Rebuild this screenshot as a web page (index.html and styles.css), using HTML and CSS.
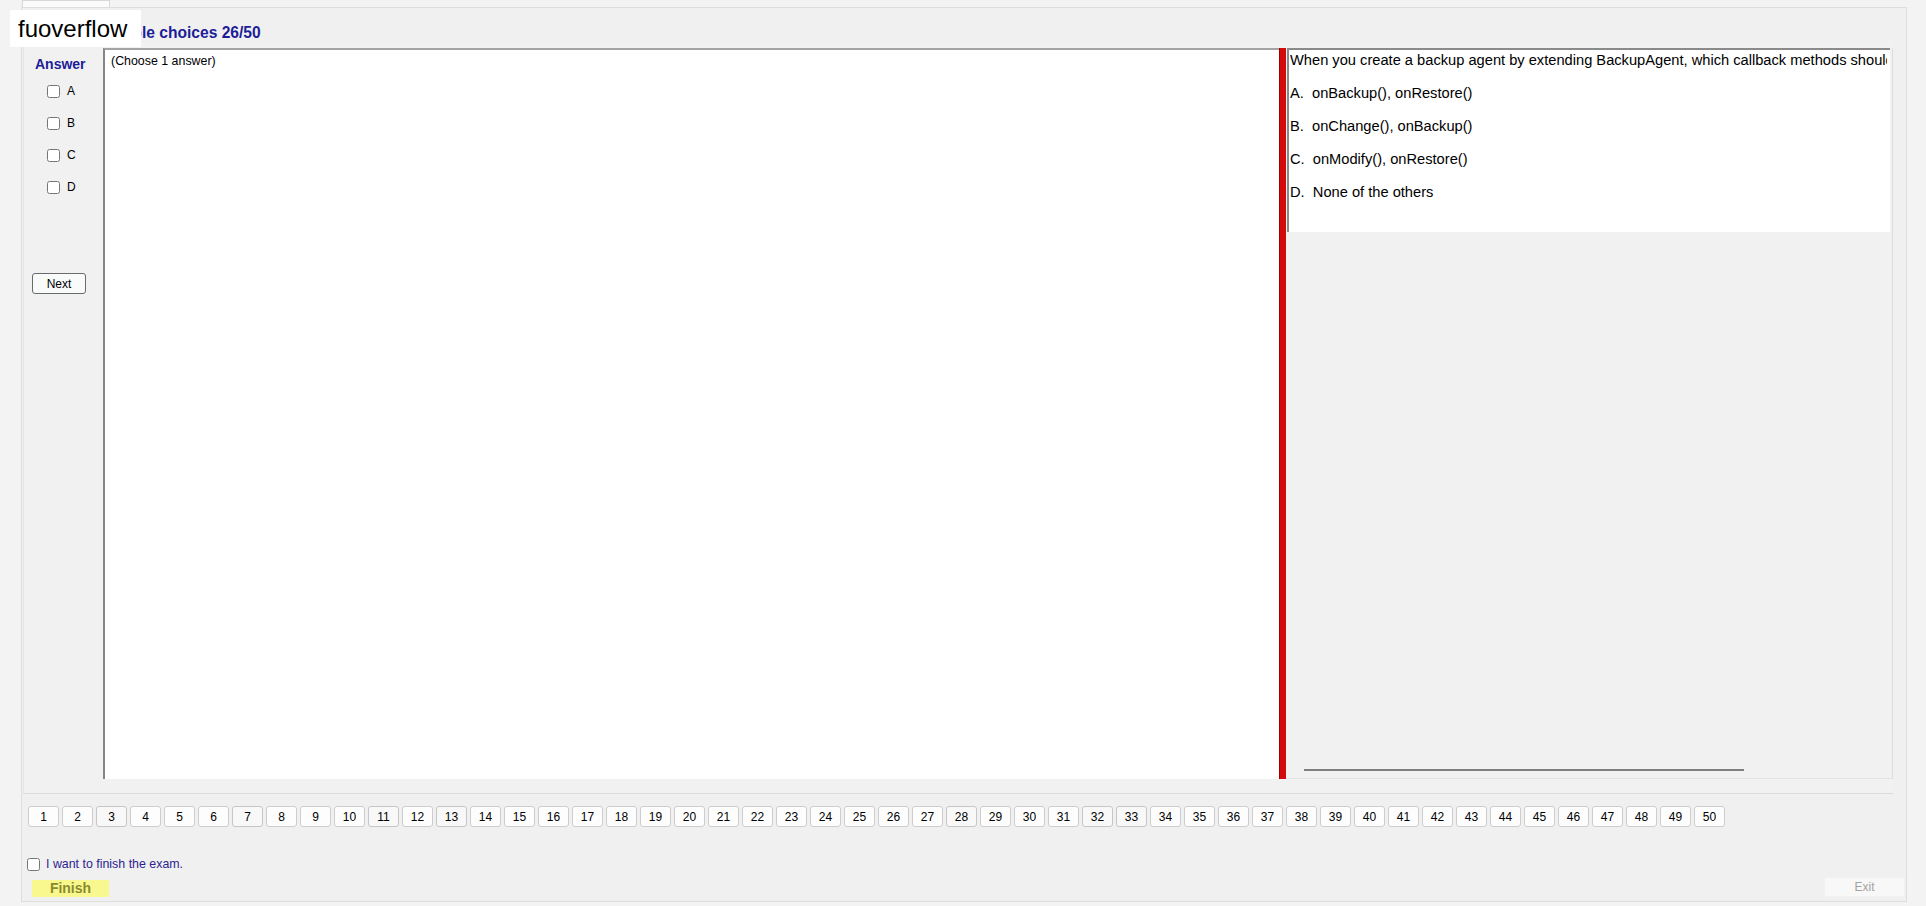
FILE: index.html
```html
<!DOCTYPE html>
<html lang="en">
<head>
<meta charset="utf-8">
<title>Exam</title>
<link rel="stylesheet" href="styles.css">
</head>
<body>
<div class="brand">fuoverflow</div>
<div class="tabstrip"><div class="tab"></div></div>
<div class="frame">
  <div class="title">Multiple choices 26/50</div>
  <div class="main">
    <div class="answer-col">
      <div class="answer-label">Answer</div>
      <label class="opt"><input type="checkbox"><span>A</span></label>
      <label class="opt"><input type="checkbox"><span>B</span></label>
      <label class="opt"><input type="checkbox"><span>C</span></label>
      <label class="opt"><input type="checkbox"><span>D</span></label>
      <button class="next">Next</button>
    </div>
    <div class="work"><div class="hint">(Choose 1 answer)</div></div>
    <div class="divider"></div>
    <div class="qpanel">
      <div class="question">
        <p class="qline qfirst">When you create a backup agent by extending BackupAgent, which callback methods should you implement?</p>
        <p class="qline opt-line">A.&nbsp; onBackup(), onRestore()</p>
        <p class="qline opt-line">B.&nbsp; onChange(), onBackup()</p>
        <p class="qline opt-line">C.&nbsp; onModify(), onRestore()</p>
        <p class="qline opt-line">D.&nbsp; None of the others</p>
      </div>
      <div class="scrollline"></div>
    </div>
  </div>
  <div class="pager">
    <button class="pg">1</button><button class="pg">2</button><button class="pg seen">3</button><button class="pg">4</button><button class="pg">5</button><button class="pg">6</button><button class="pg seen">7</button><button class="pg">8</button><button class="pg">9</button><button class="pg">10</button><button class="pg seen">11</button><button class="pg">12</button><button class="pg seen">13</button><button class="pg">14</button><button class="pg">15</button><button class="pg">16</button><button class="pg">17</button><button class="pg">18</button><button class="pg">19</button><button class="pg">20</button><button class="pg">21</button><button class="pg">22</button><button class="pg">23</button><button class="pg">24</button><button class="pg">25</button><button class="pg">26</button><button class="pg">27</button><button class="pg seen">28</button><button class="pg">29</button><button class="pg">30</button><button class="pg">31</button><button class="pg seen">32</button><button class="pg seen">33</button><button class="pg">34</button><button class="pg">35</button><button class="pg">36</button><button class="pg">37</button><button class="pg">38</button><button class="pg">39</button><button class="pg">40</button><button class="pg">41</button><button class="pg">42</button><button class="pg">43</button><button class="pg">44</button><button class="pg">45</button><button class="pg">46</button><button class="pg">47</button><button class="pg">48</button><button class="pg">49</button><button class="pg">50</button>
  </div>
  <label class="finish-check"><input type="checkbox"><span>I want to finish the exam.</span></label>
  <div class="actions">
    <div class="finish">Finish</div>
    <button class="exit" disabled>Exit</button>
  </div>
</div>
</body>
</html>
```

FILE: styles.css
```css
* { box-sizing: border-box; }
html, body { margin: 0; padding: 0; }
body {
  width: 1926px;
  height: 906px;
  overflow: hidden;
  background: #f3f3f3;
  font-family: "Liberation Sans", Arial, sans-serif;
  color: #000;
  position: relative;
}
.brand {
  position: absolute;
  left: 10px;
  top: 10px;
  width: 131px;
  height: 37px;
  background: #fff;
  font-size: 24px;
  line-height: 37px;
  padding-left: 8px;
  color: #000;
  z-index: 5;
}
.tabstrip {
  height: 7px;
  display: flex;
}
.tab {
  margin-left: 22px;
  width: 88px;
  height: 7px;
  background: #fbfbfb;
  border: 1px solid #d8d8d8;
  border-bottom: none;
}
.frame {
  margin-left: 21px;
  width: 1886px;
  height: 895px;
  border: 1px solid #dedede;
  background: #f0f0f0;
  display: flex;
  flex-direction: column;
}
.title {
  margin: 16px 0 0 74px;
  height: 18px;
  line-height: 18px;
  font-size: 15.6px;
  font-weight: bold;
  color: #1d1d98;
}
.main {
  margin-left: 1px;
  width: 1870px;
  height: 752px;
  padding-top: 6px;
  padding-bottom: 14px;
  border-bottom: 1px solid #dcdcdc;
  border-left: 1px solid #e6e6e6;
  display: flex;
  background: #f1f1f1;
}
.answer-col {
  width: 79px;
  display: flex;
  flex-direction: column;
}
.answer-label {
  margin-top: 8px;
  padding-left: 11px;
  height: 16px;
  line-height: 16px;
  font-size: 14px;
  font-weight: bold;
  color: #1d1d98;
}
.opt {
  height: 32px;
  display: flex;
  align-items: center;
  padding-left: 23px;
  font-size: 12px;
}
.opt:first-of-type { margin-top: 3px; }
.opt input {
  margin: 0 7px 0 0;
  width: 13px;
  height: 13px;
}
.next {
  margin: 70px 0 0 8px;
  width: 54px;
  height: 21px;
  padding: 0;
  border: 1px solid #6a6a6a;
  border-radius: 3px;
  background: #f9fbfa;
  font-family: "Liberation Sans", Arial, sans-serif;
  font-size: 12px;
  color: #000;
}
.work {
  width: 1176px;
  height: 731px;
  background: #fff;
  border-left: 2px solid #858585;
  border-top: 2px solid #a3a3a3;
  padding: 3px 6px;
}
.hint {
  font-size: 12.4px;
  line-height: 16px;
}
.divider {
  width: 7px;
  height: 731px;
  background: #d40a0a;
  border-left: 1px solid #9c0000;
}
.qpanel {
  width: 607px;
  height: 731px;
  border-right: 1px solid #dcdcdc;
  border-bottom: 1px solid #e2e2e2;
  display: flex;
  flex-direction: column;
}
.question {
  margin-left: 1px;
  width: 603px;
  height: 184px;
  background: #fff;
  border-top: 2px solid #8a8a8a;
  border-left: 2px solid #8a8a8a;
  padding: 1px 0 0 1px;
  overflow: hidden;
}
.qline {
  margin: 0;
  height: 18px;
  line-height: 18px;
  font-size: 11pt;
  white-space: nowrap;
  overflow: hidden;
}
.qfirst { width: 597px; }
.opt-line { margin-top: 15px; }
.scrollline {
  margin: 537px 0 0 18px;
  width: 440px;
  height: 2px;
  background: #7f7f7f;
}
.pager {
  margin: 12px 0 0 6px;
  display: flex;
  gap: 3px;
}
.pg {
  width: 31px;
  height: 21px;
  padding: 0;
  border: 1px solid #cdcdcd;
  border-radius: 3px;
  background: #fdfdfd;
  font-family: "Liberation Sans", Arial, sans-serif;
  font-size: 12px;
  color: #000;
}
.pg.seen {
  background: #f8f8f8;
  border-color: #c6c6c6;
}
.finish-check {
  margin: 29px 0 0 5px;
  height: 16px;
  display: flex;
  align-items: center;
  font-size: 12.4px;
  color: #2e2390;
}
.finish-check input {
  margin: 0 6px 0 0;
  width: 13px;
  height: 13px;
}
.actions {
  margin-top: 5px;
  height: 20px;
  display: flex;
  justify-content: space-between;
  align-items: flex-end;
}
.finish {
  margin-left: 10px;
  width: 77px;
  height: 17px;
  background: #f8f88e;
  color: #8a8a2c;
  font-size: 14px;
  font-weight: bold;
  line-height: 17px;
  text-align: center;
}
.exit {
  margin-right: 1px;
  width: 81px;
  height: 20px;
  padding: 0;
  border: 1px solid #f1f1f1;
  background: #f8f8f8;
  color: #a3a3a3;
  font-family: "Liberation Sans", Arial, sans-serif;
  font-size: 12px;
}
```
